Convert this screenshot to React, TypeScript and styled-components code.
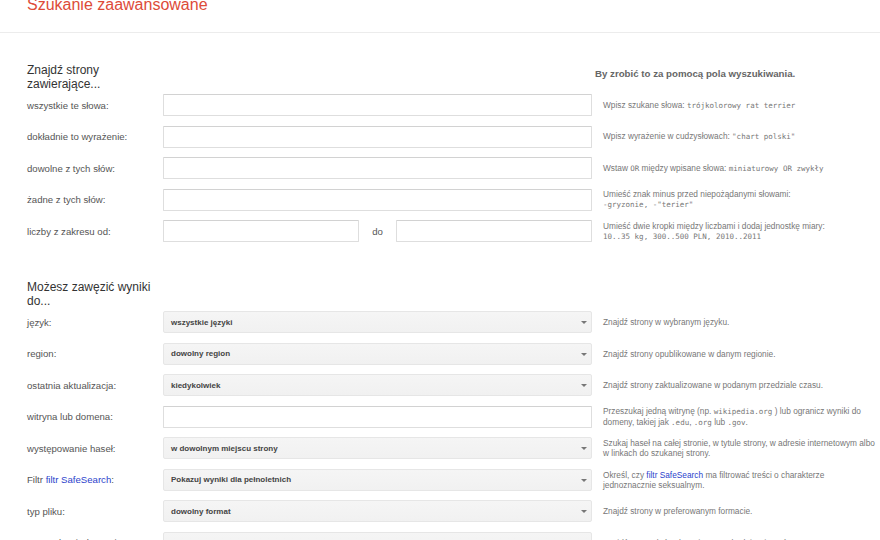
import React from "react";
import styled, { createGlobalStyle } from "styled-components";

const GlobalStyle = createGlobalStyle`
  body {
    margin: 0;
    background: #fff;
    font-family: "Liberation Sans", Arial, sans-serif;
    overflow: hidden;
  }
`;

const Page = styled.div`
  width: 880px;
  height: 540px;
  overflow: hidden;
`;

const Header = styled.header`
  display: flex;
  align-items: flex-start;
  height: 33px;
  box-sizing: border-box;
  padding-left: 27px;
  border-bottom: 1px solid #ececec;
`;

const Title = styled.h1`
  margin: -3px 0 0;
  font-size: 16px;
  line-height: 16px;
  font-weight: normal;
  color: #dd4b39;
`;

const Section = styled.section<{ $top: number }>`
  margin-top: ${(p) => p.$top}px;
  padding-left: 27px;
`;

const Grid = styled.div`
  display: grid;
  grid-template-columns: 136px 429px 283px;
  align-items: center;
`;

const HeadRow = styled(Grid)`
  min-height: 28px;
`;

const SectionTitle = styled.h2`
  margin: 0;
  font-size: 12px;
  line-height: 14px;
  font-weight: normal;
  color: #333;
`;

const HintHead = styled.div`
  grid-column: 3;
  padding-left: 3px;
  margin-top: -7px;
  font-size: 9.7px;
  font-weight: bold;
  color: #666;
  white-space: nowrap;
`;

const Rows = styled.div`
  display: flex;
  flex-direction: column;
  gap: 9.5px;
  margin-top: 3px;
`;

const Row = styled(Grid)`
  min-height: 22px;
`;

const Label = styled.label`
  font-size: 9.6px;
  color: #555;
  white-space: nowrap;
`;

const Link = styled.a`
  color: #2b3fcc;
  text-decoration: none;
`;

const TextInput = styled.input`
  display: block;
  flex: 1;
  min-width: 0;
  width: 100%;
  height: 22px;
  box-sizing: border-box;
  margin: 0;
  border: 1px solid #dedede;
  border-top-color: #d2d2d2;
  border-radius: 1px;
  background: #fff;
  outline: none;
`;

const Range = styled.div`
  display: flex;
  align-items: center;
`;

const RangeTo = styled.span`
  flex: 0 0 37px;
  text-align: center;
  font-size: 9.6px;
  color: #555;
`;

const SelectBox = styled.button`
  position: relative;
  display: flex;
  align-items: center;
  width: 100%;
  height: 22px;
  box-sizing: border-box;
  margin: 0;
  padding: 0 0 0 7px;
  border: 1px solid #e6e6e6;
  border-radius: 2px;
  background: linear-gradient(#f5f5f5, #f1f1f1);
  font-family: "Liberation Sans", Arial, sans-serif;
  font-size: 8px;
  font-weight: bold;
  color: #444;
  text-align: left;

  &::after {
    content: "";
    position: absolute;
    right: 4px;
    top: 9px;
    border-left: 3px solid transparent;
    border-right: 3px solid transparent;
    border-top: 3px solid #777;
  }
`;

const Hint = styled.div`
  padding-left: 11px;
  max-width: 272px;
  font-size: 8.3px;
  line-height: 10px;
  color: #777;
`;

const Code = styled.code`
  font-family: "DejaVu Sans Mono", "Liberation Mono", monospace;
  font-size: 7.5px;
  color: #777;
`;

type Field = { kind: "input" } | { kind: "range" } | { kind: "select"; value: string };

type Item = { label: React.ReactNode; field: Field; hint: React.ReactNode };

const inputs: Item[] = [
  {
    label: "wszystkie te słowa:",
    field: { kind: "input" },
    hint: (
      <>
        Wpisz szukane słowa: <Code>trójkolorowy rat terrier</Code>
      </>
    ),
  },
  {
    label: "dokładnie to wyrażenie:",
    field: { kind: "input" },
    hint: (
      <>
        Wpisz wyrażenie w cudzysłowach: <Code>"chart polski"</Code>
      </>
    ),
  },
  {
    label: "dowolne z tych słów:",
    field: { kind: "input" },
    hint: (
      <>
        Wstaw <Code>OR</Code> między wpisane słowa: <Code>miniaturowy OR zwykły</Code>
      </>
    ),
  },
  {
    label: "żadne z tych słów:",
    field: { kind: "input" },
    hint: (
      <>
        Umieść znak minus przed niepożądanymi słowami:
        <br />
        <Code>-gryzonie, -"terier"</Code>
      </>
    ),
  },
  {
    label: "liczby z zakresu od:",
    field: { kind: "range" },
    hint: (
      <>
        Umieść dwie kropki między liczbami i dodaj jednostkę miary:
        <br />
        <Code>10..35 kg, 300..500 PLN, 2010..2011</Code>
      </>
    ),
  },
];

const filters: Item[] = [
  {
    label: "język:",
    field: { kind: "select", value: "wszystkie języki" },
    hint: "Znajdź strony w wybranym języku.",
  },
  {
    label: "region:",
    field: { kind: "select", value: "dowolny region" },
    hint: "Znajdź strony opublikowane w danym regionie.",
  },
  {
    label: "ostatnia aktualizacja:",
    field: { kind: "select", value: "kiedykolwiek" },
    hint: "Znajdź strony zaktualizowane w podanym przedziale czasu.",
  },
  {
    label: "witryna lub domena:",
    field: { kind: "input" },
    hint: (
      <>
        Przeszukaj jedną witrynę (np. <Code>wikipedia.org</Code> ) lub ogranicz wyniki do domeny,
        takiej jak <Code>.edu</Code>, <Code>.org</Code> lub <Code>.gov</Code>.
      </>
    ),
  },
  {
    label: "występowanie haseł:",
    field: { kind: "select", value: "w dowolnym miejscu strony" },
    hint: "Szukaj haseł na całej stronie, w tytule strony, w adresie internetowym albo w linkach do szukanej strony.",
  },
  {
    label: (
      <>
        Filtr <Link href="#">filtr SafeSearch</Link>:
      </>
    ),
    field: { kind: "select", value: "Pokazuj wyniki dla pełnoletnich" },
    hint: (
      <>
        Określ, czy <Link href="#">filtr SafeSearch</Link> ma filtrować treści o charakterze
        jednoznacznie seksualnym.
      </>
    ),
  },
  {
    label: "typ pliku:",
    field: { kind: "select", value: "dowolny format" },
    hint: "Znajdź strony w preferowanym formacie.",
  },
  {
    label: "prawa do użytkowania:",
    field: { kind: "select", value: "z dowolną licencją" },
    hint: "Znajdź strony, których możesz swobodnie używać.",
  },
];

const FieldControl = ({ field }: { field: Field }) => {
  if (field.kind === "range") {
    return (
      <Range>
        <TextInput type="text" />
        <RangeTo>do</RangeTo>
        <TextInput type="text" />
      </Range>
    );
  }
  if (field.kind === "select") {
    return <SelectBox type="button">{field.value}</SelectBox>;
  }
  return <TextInput type="text" />;
};

const FormRows = ({ items }: { items: Item[] }) => (
  <Rows>
    {items.map((item, i) => (
      <Row key={i}>
        <Label>{item.label}</Label>
        <FieldControl field={item.field} />
        <Hint>{item.hint}</Hint>
      </Row>
    ))}
  </Rows>
);

export default function App() {
  return (
    <Page>
      <GlobalStyle />
      <Header>
        <Title>Szukanie zaawansowane</Title>
      </Header>

      <Section $top={30}>
        <HeadRow>
          <SectionTitle>Znajdź strony zawierające...</SectionTitle>
          <HintHead>By zrobić to za pomocą pola wyszukiwania.</HintHead>
        </HeadRow>
        <FormRows items={inputs} />
      </Section>

      <Section $top={38}>
        <HeadRow>
          <SectionTitle>Możesz zawęzić wyniki do...</SectionTitle>
        </HeadRow>
        <FormRows items={filters} />
      </Section>
    </Page>
  );
}
